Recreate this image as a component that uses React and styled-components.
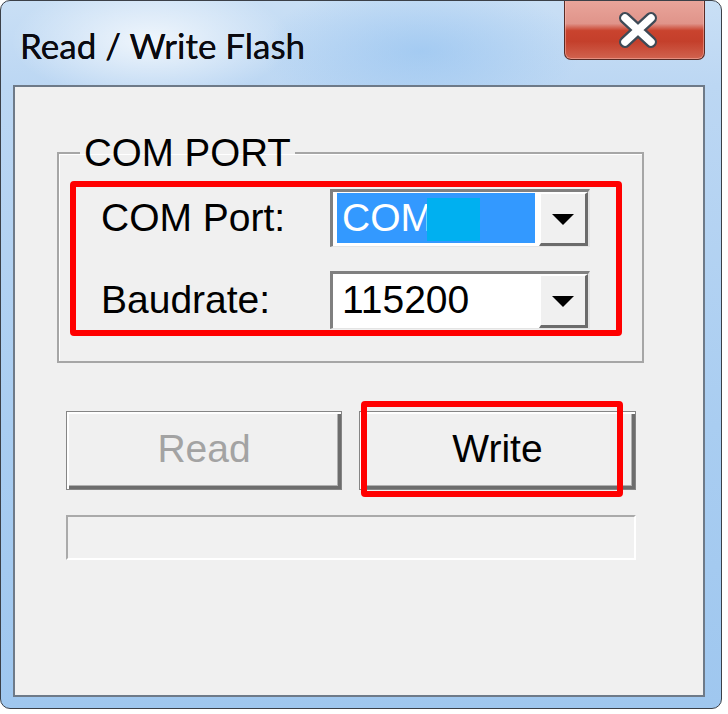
import styled, { createGlobalStyle } from "styled-components";

const GlobalStyle = createGlobalStyle`
  html, body {
    margin: 0;
    padding: 0;
    background: #ffffff;
  }
  body {
    width: 728px;
    height: 714px;
    overflow: hidden;
  }
`;

const Window = styled.div`
  width: 722px;
  height: 709px;
  box-sizing: border-box;
  border: 1px solid #3b4048;
  border-radius: 10px;
  overflow: hidden;
  display: flex;
  flex-direction: column;
  padding: 0 16px 11px 12px;
  background:
    radial-gradient(ellipse 140px 60px at 150px 40px, rgba(255, 255, 255, 0.75), rgba(255, 255, 255, 0) 100%),
    radial-gradient(ellipse 160px 70px at 420px 50px, rgba(140, 190, 240, 0.55), rgba(140, 190, 240, 0) 100%),
    linear-gradient(180deg, #c9dff5 0%, #bcd7f3 12%, #a9cdf1 60%, #9fc7ef 100%);
`;

const TitleBar = styled.div`
  height: 84px;
  display: flex;
  justify-content: space-between;
  align-items: flex-start;
  flex-shrink: 0;
`;

const Title = styled.span`
  margin: 26px 0 0 7px;
  font-family: Lato, "Noto Sans", sans-serif;
  font-size: 35px;
  line-height: 36px;
  color: #0a0a10;
  text-shadow: 0 0 0.4px #0a0a10;
`;

const CloseButton = styled.div`
  width: 141px;
  height: 60px;
  box-sizing: border-box;
  margin-top: -1px;
  border: 1px solid #5a2b25;
  border-top: none;
  border-radius: 0 0 7px 7px;
  display: flex;
  align-items: center;
  justify-content: center;
  padding-left: 6px;
  box-shadow: inset 0 0 0 1px rgba(255, 200, 190, 0.45);
  background: linear-gradient(
    180deg,
    #e9a59b 0%,
    #e0948a 40%,
    #c9432e 52%,
    #c43f2b 70%,
    #d0634f 100%
  );
`;

const Client = styled.div`
  flex: 1;
  background: #f0f0f0;
  border: 2px solid #6e7a88;
  display: flex;
  flex-direction: column;
  align-items: flex-start;
  font-family: "Liberation Sans", Arial, sans-serif;
  color: #000;
`;

const Group = styled.fieldset`
  margin: 44px 0 0 42px;
  width: 587px;
  box-sizing: border-box;
  padding: 0 20px 25px 11px;
  border: 2px solid #a6a6a6;
  box-shadow: inset 1px 1px 0 #ffffff;
`;

const GroupLegend = styled.legend`
  margin-left: 10px;
  padding: 0 4px;
  font-size: 38.5px;
  line-height: 44px;
`;

const Highlight = styled.div`
  margin-top: 6px;
  border: 6px solid #ff0000;
  border-radius: 4px;
  padding: 2px 26px 1px 25px;
  display: grid;
  grid-template-columns: 229px 1fr;
  row-gap: 24px;
  align-items: center;
`;

const Label = styled.span`
  font-size: 39px;
  line-height: 44px;
`;

const Combo = styled.div`
  height: 58px;
  box-sizing: border-box;
  display: flex;
  border-top: 3px solid #808080;
  border-left: 3px solid #808080;
  border-right: 2px solid #e4e4e4;
  border-bottom: 1px solid #e4e4e4;
  background: #ffffff;
`;

const Field = styled.div`
  flex: 1;
  padding: 1px 4px 3px 4px;
  display: flex;
`;

const FieldValue = styled.div`
  flex: 1;
  display: flex;
  align-items: center;
  padding-left: 5px;
  background: ${(p) => (p.$selected ? "#3399ff" : "transparent")};
  color: ${(p) => (p.$selected ? "#ffffff" : "#000000")};
  font-size: 39px;
  line-height: 44px;
`;

const Redacted = styled.span`
  display: inline-block;
  width: 53px;
  height: 43px;
  margin: 5px 0 0 -6px;
  align-self: flex-start;
  background: #00b0f0;
`;

const DropButton = styled.div`
  width: 49px;
  box-sizing: border-box;
  background: #f0f0f0;
  border-top: 2px solid #ffffff;
  border-left: 2px solid #ffffff;
  border-right: 3px solid #6b6b6b;
  border-bottom: 3px solid #6b6b6b;
  display: flex;
  align-items: center;
  justify-content: center;
`;

const Arrow = styled.span`
  width: 0;
  height: 0;
  border-left: 11px solid transparent;
  border-right: 11px solid transparent;
  border-top: 11px solid #000000;
  margin-top: 2px;
`;

const ButtonRow = styled.div`
  margin: 48px 0 0 51px;
  display: grid;
  grid-template-columns: 276px 277px;
  column-gap: 17px;
`;

const ButtonSlot = styled.div`
  position: relative;
`;

const PushButton = styled.div`
  height: 79px;
  box-sizing: border-box;
  border: 1px solid #858585;
  background: #f0f0f0;
  box-shadow:
    inset 2px 2px 0 #ffffff,
    inset -3px -3px 0 #6d6d6d,
    inset -4px -4px 0 #b0b0b0;
  display: flex;
  align-items: center;
  justify-content: center;
  padding-bottom: 4px;
  font-size: 39px;
  color: ${(p) => (p.$disabled ? "#a3a3a3" : "#000000")};
`;

const Marker = styled.div`
  position: absolute;
  left: 2px;
  top: -10px;
  width: 262px;
  height: 96px;
  box-sizing: border-box;
  border: 6px solid #ff0000;
  border-radius: 4px;
  pointer-events: none;
`;

const Progress = styled.div`
  margin: 25px 0 0 51px;
  width: 570px;
  height: 45px;
  box-sizing: border-box;
  border-top: 2px solid #aaaaaa;
  border-left: 2px solid #aaaaaa;
  border-right: 2px solid #ffffff;
  border-bottom: 2px solid #ffffff;
  background: #f1f1f1;
`;

function CloseGlyph() {
  return (
    <svg width="44" height="36" viewBox="0 0 44 36">
      <path
        d="M9 6 L35 30 M35 6 L9 30"
        stroke="#3e4a56"
        strokeWidth="12"
        strokeLinecap="round"
        fill="none"
      />
      <path
        d="M9 6 L35 30 M35 6 L9 30"
        stroke="#ffffff"
        strokeWidth="7.5"
        strokeLinecap="round"
        fill="none"
      />
    </svg>
  );
}

function ComboBox({ value, selected, redacted }) {
  return (
    <Combo>
      <Field>
        <FieldValue $selected={selected}>
          {value}
          {redacted && <Redacted />}
        </FieldValue>
      </Field>
      <DropButton>
        <Arrow />
      </DropButton>
    </Combo>
  );
}

export default function App() {
  return (
    <>
      <GlobalStyle />
      <Window>
        <TitleBar>
          <Title>Read / Write Flash</Title>
          <CloseButton>
            <CloseGlyph />
          </CloseButton>
        </TitleBar>
        <Client>
          <Group>
            <GroupLegend>COM PORT</GroupLegend>
            <Highlight>
              <Label>COM Port:</Label>
              <ComboBox value="COM" selected redacted />
              <Label>Baudrate:</Label>
              <ComboBox value="115200" />
            </Highlight>
          </Group>
          <ButtonRow>
            <ButtonSlot>
              <PushButton $disabled>Read</PushButton>
            </ButtonSlot>
            <ButtonSlot>
              <PushButton>Write</PushButton>
              <Marker />
            </ButtonSlot>
          </ButtonRow>
          <Progress />
        </Client>
      </Window>
    </>
  );
}
